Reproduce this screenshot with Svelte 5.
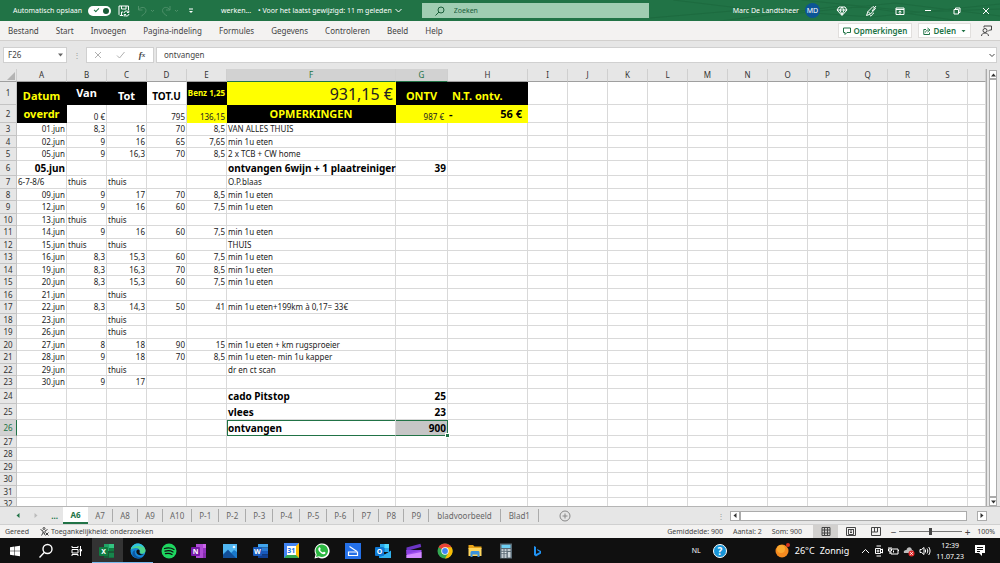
<script>
	const menu = ['Bestand', 'Start', 'Invoegen', 'Pagina-indeling', 'Formules', 'Gegevens', 'Controleren', 'Beeld', 'Help'];
	const letters = 'ABCDEFGHIJKLMNOPQRS'.split('');
	const tabs = ['A6', 'A7', 'A8', 'A9', 'A10', 'P-1', 'P-2', 'P-3', 'P-4', 'P-5', 'P-6', 'P7', 'P8', 'P9', 'bladvoorbeeld', 'Blad1'];

	// row number, height, cells from column A on
	const rows = [
		[3, 13, ['01.jun', '8,3', '16', '70', '8,5', 'VAN ALLES THUIS']],
		[4, 12, ['02.jun', '9', '16', '65', '7,65', 'min 1u eten']],
		[5, 13, ['05.jun', '9', '16,3', '70', '8,5', '2 x TCB + CW home']],
		[6, 15, ['05.jun', '', '', '', '', 'ontvangen 6wijn + 1 plaatreiniger', '39']],
		[7, 13, ['6-7-8/6', 'thuis', 'thuis', '', '', 'O.P.blaas']],
		[8, 12, ['09.jun', '9', '17', '70', '8,5', 'min 1u eten']],
		[9, 13, ['12.jun', '9', '16', '60', '7,5', 'min 1u eten']],
		[10, 12, ['13.jun', 'thuis', 'thuis']],
		[11, 13, ['14.jun', '9', '16', '60', '7,5', 'min 1u eten']],
		[12, 12, ['15.jun', 'thuis', 'thuis', '', '', 'THUIS']],
		[13, 13, ['16.jun', '8,3', '15,3', '60', '7,5', 'min 1u eten']],
		[14, 12, ['19.jun', '8,3', '16,3', '70', '8,5', 'min 1u eten']],
		[15, 13, ['20.jun', '8,3', '15,3', '60', '7,5', 'min 1u eten']],
		[16, 12, ['21.jun', '', 'thuis']],
		[17, 13, ['22.jun', '8,3', '14,3', '50', '41', 'min 1u eten+199km à 0,17= 33€']],
		[18, 12, ['23.jun', '', 'thuis']],
		[19, 13, ['26.jun', '', 'thuis']],
		[20, 12, ['27.jun', '8', '18', '90', '15', 'min 1u eten + km rugsproeier']],
		[21, 13, ['28.jun', '9', '18', '70', '8,5', 'min 1u eten- min 1u kapper']],
		[22, 12, ['29.jun', '', 'thuis', '', '', 'dr en ct scan']],
		[23, 13, ['30.jun', '9', '17']],
		[24, 15, ['', '', '', '', '', 'cado Pitstop', '25']],
		[25, 16, ['', '', '', '', '', 'vlees', '23']],
		[26, 16, ['', '', '', '', '', 'ontvangen', '900']],
		[27, 12, []],
		[28, 13, []],
		[29, 12, []],
		[30, 13, []],
		[31, 12, []],
		[32, 13, []]
	];
	const big = [6, 24, 25, 26];

	let autosave = true;
	let active = 'A6';
	let formula = 'ontvangen';
	let search = '';
	let zoom = 50;

	function isNumber(value, col) {
		return col < 5 || col === 6 ? /^\d/.test(value) && value !== '6-7-8/6' : false;
	}
</script>

<div class="app">
	<header class="title">
		<svg class="pattern" viewBox="0 0 300 21" preserveAspectRatio="none" aria-hidden="true">
			<path d="M0 18L90 9L190 17L300 4M20 0L120 14L210 3L300 16M60 21L170 5L260 20M130 0L230 12L300 9" fill="none" stroke="#1b663c" />
		</svg>
		<label class="auto">
			Automatisch opslaan
			<input type="checkbox" bind:checked={autosave} />
		</label>
		<button aria-label="Opslaan">
			<svg width="12" height="12" viewBox="0 0 12 12" class="line"><path d="M5 10.500H2L1 9.500V1H10.500V5M3.500 1V4H8V1M3.500 10V7H5M6 8A2.500 2.500 0 0 1 10.500 7M10.800 5.500V7.500H9M11 9A2.500 2.500 0 0 1 6.500 10M6.200 11.500V9.500H8" /></svg>
		</button>
		<button class="dim undo" aria-label="Ongedaan maken">
			<svg width="18" height="12" viewBox="0 0 18 12" class="line"><path d="M1.500 1V5H5.500M1.500 5C4 1 9 2 9 5.500C9 8 7 9 4.500 11M14 5L15.500 6.500L17 5" /></svg>
		</button>
		<button class="dim redo" aria-label="Opnieuw">
			<svg width="18" height="12" viewBox="0 0 18 12" class="line"><path d="M9 1V5H5M9 5C6.500 1 1.500 2 1.500 5.500C1.500 8 3.500 9 6 11M14 5L15.500 6.500L17 5" /></svg>
		</button>
		<button class="more" aria-label="Werkbalk aanpassen">
			<svg width="6" height="6" viewBox="0 0 6 6"><path d="M1 0.500H5V1.500H1ZM1 3H5L3 5Z" fill="#fff" /></svg>
		</button>
		<span class="file">werken...</span>
		<button class="changed">
			• Voor het laatst gewijzigd: 11 m geleden
			<svg width="7" height="5" viewBox="0 0 7 5" class="line"><path d="M.5 1L3.500 4L6.500 1" /></svg>
		</button>
		<label class="search">
			<svg width="10" height="10" viewBox="0 0 10 10" class="line"><circle cx="6" cy="4" r="3" /><path d="M4 6L.5 9.500" /></svg>
			<input type="text" placeholder="Zoeken" aria-label="Zoeken" bind:value={search} />
		</label>
		<span class="user">Marc De Landtsheer</span>
		<span class="avatar">MD</span>
		<div class="window">
			<button aria-label="Premium"><svg width="12" height="12" viewBox="0 0 12 12" class="line"><path d="M3 2H9L11 5L6 10.500L1 5ZM1 5H11M4 5L6 10L8 5L6 2L4 5" /></svg></button>
			<button aria-label="Pen"><svg width="12" height="12" viewBox="0 0 12 12" class="line"><path d="M1.500 10.500L3 6.500L8 1.500L10.500 3.500L5.500 9L1.500 10.500M3 6.500L5.500 9M7 6L11 1M5 11C8 11 7 8 9 8" /></svg></button>
			<button aria-label="Lint"><svg width="10" height="10" viewBox="0 0 10 10" class="line"><path d="M1 2H9V8.500H1ZM1 3.500H9M5 8V5M3.500 6.200L5 4.800L6.500 6.200" /></svg></button>
			<button aria-label="Minimaliseren"><svg width="8" height="8" viewBox="0 0 8 8" class="line"><path d="M1 3.500H7" /></svg></button>
			<button aria-label="Verkleinen"><svg width="8" height="8" viewBox="0 0 8 8" class="line"><path d="M1 2.500H5.500V7H1ZM2.500 2.500V1H7V5.500H5.500" /></svg></button>
			<button aria-label="Sluiten"><svg width="8" height="8" viewBox="0 0 8 8" class="line"><path d="M1 1L7 7M7 1L1 7" /></svg></button>
		</div>
	</header>

	<nav class="ribbon">
		{#each menu as item}
			<button>{item}</button>
		{/each}
		<div class="share">
			<button class="box">
				<svg width="8" height="8" viewBox="0 0 8 8" class="line"><path d="M.5 1H7.500V5.500H4L2 7.500V5.500H.5Z" /></svg>
				Opmerkingen
			</button>
			<button class="box">
				<svg width="8" height="8" viewBox="0 0 8 8" class="line"><path d="M3 2.500H.8V7.500H6.500V5.500M2.500 5.500C3 3.500 4 3 5.500 3M4.500 1L7 3L4.500 5" /></svg>
				Delen
				<svg class="caret" width="5" height="4" viewBox="0 0 5 4"><path d="M.5 1H4.500L2.500 3.200Z" fill="#217346" /></svg>
			</button>
			<button class="person" aria-label="Feedback">
				<svg width="12" height="12" viewBox="0 0 12 12" class="line"><circle cx="5" cy="5.500" r="2" /><path d="M1.500 11C1.500 7 8.500 7 8.500 11M4 2.500V1H11.500V5H9.500L8 6.500" /></svg>
			</button>
		</div>
	</nav>

	<div class="bar">
		<div class="name">
			<select aria-label="Naamvak"><option>F26</option></select>
			<svg width="5" height="4" viewBox="0 0 5 4"><path d="M0 .5H5L2.500 3.500Z" fill="#666" /></svg>
		</div>
		<span class="dots">⋮</span>
		<div class="tools">
			<button aria-label="Annuleren"><svg width="8" height="8" viewBox="0 0 8 8" class="line"><path d="M1 1L7 7M7 1L1 7" /></svg></button>
			<button aria-label="Invoeren"><svg width="9" height="8" viewBox="0 0 9 8" class="line"><path d="M1 4.500L3.500 7L8.500 1" /></svg></button>
			<button class="fx" aria-label="Functie invoegen">f<small>x</small></button>
		</div>
		<div class="formula">
			<input type="text" aria-label="Formulebalk" bind:value={formula} />
			<svg width="6" height="5" viewBox="0 0 6 5" class="line"><path d="M.5 1L3 3.500L5.500 1" /></svg>
		</div>
	</div>

	<main>
		<div class="sheet">
			<table>
				<colgroup>
					<col class="w17" /><col class="w50" />
					<col class="w40" /><col class="w40" /><col class="w40" /><col class="w40" />
					<col class="w169" /><col class="w52" /><col class="w80" />
					{#each letters.slice(8) as l}<col class="w40" />{/each}
					<col />
				</colgroup>
				<thead>
					<tr>
						<th class="corner"><svg width="8" height="8" viewBox="0 0 8 8"><path d="M8 0V8H0Z" fill="#b4b4b4" /></svg></th>
						{#each letters as l}
							<th class:on={l === 'F' || l === 'G'}>{l}</th>
						{/each}
						<th></th>
					</tr>
				</thead>
				<tbody>
					<tr class="head first">
						<th>1</th>
						<td class="k">Datum</td>
						<td class="k white mid">Van</td>
						<td class="k white">Tot</td>
						<td class="totu">TOT.U</td>
						<td class="k benz mid">Benz 1,25</td>
						<td class="y sum">931,15 €</td>
						<td class="k">ONTV</td>
						<td class="k left">N.T. ontv.</td>
						{#each letters.slice(7) as l}<td></td>{/each}
					</tr>
					<tr class="head second">
						<th>2</th>
						<td class="k">overdr</td>
						<td class="num">0 €</td>
						<td></td>
						<td class="num">795</td>
						<td class="num y">136,15</td>
						<td class="k">OPMERKINGEN</td>
						<td class="num y euro">987 €</td>
						<td class="y"><span class="acc"><span>-</span><span>56 €</span></span></td>
						{#each letters.slice(7) as l}<td></td>{/each}
					</tr>
					{#each rows as [n, height, cells]}
						<tr style="height: {height}px" class:big={big.includes(n)} class:pick={n === 26}>
							<th class:on={n === 26}>{n}</th>
							{#each { length: 20 } as _, col}
								<td class:num={isNumber(cells[col] ?? '', col)}>{cells[col] ?? ''}</td>
							{/each}
						</tr>
					{/each}
				</tbody>
			</table>
		</div>
		<div class="vscroll">
			<button aria-label="Omhoog"><svg width="5" height="4" viewBox="0 0 5 4"><path d="M0 3.500H5L2.500 .5Z" fill="#333" /></svg></button>
			<div class="thumb"></div>
			<button aria-label="Omlaag"><svg width="5" height="4" viewBox="0 0 5 4"><path d="M0 .5H5L2.500 3.500Z" fill="#333" /></svg></button>
		</div>
	</main>

	<div class="tabs">
		<div class="arrows">
			<button aria-label="Vorige"><svg width="4" height="5" viewBox="0 0 4 5"><path d="M3.500 0V5L.5 2.500Z" fill="#217346" /></svg></button>
			<button aria-label="Volgende"><svg width="4" height="5" viewBox="0 0 4 5"><path d="M.5 0V5L3.500 2.500Z" fill="#bbb" /></svg></button>
			<button class="dotdot">...</button>
		</div>
		{#each tabs as tab}
			<button class="tab" class:wide={tab.length > 3} class:active={tab === active} on:click={() => (active = tab)}>{tab}</button>
		{/each}
		<button class="plus" aria-label="Nieuw blad">
			<svg width="12" height="12" viewBox="0 0 12 12" class="line"><circle cx="6" cy="6" r="5" /><path d="M6 3.500V8.500M3.500 6H8.500" /></svg>
		</button>
		<span class="dots grip">⋮</span>
		<div class="hscroll">
			<button aria-label="Links"><svg width="4" height="5" viewBox="0 0 4 5"><path d="M3.500 0V5L.5 2.500Z" fill="#333" /></svg></button>
			<div class="thumb"></div>
			<button aria-label="Rechts"><svg width="4" height="5" viewBox="0 0 4 5"><path d="M.5 0V5L3.500 2.500Z" fill="#333" /></svg></button>
		</div>
	</div>

	<footer class="status">
		<span>Gereed</span>
		<button class="access">
			<svg width="9" height="9" viewBox="0 0 9 9" class="line"><circle cx="4" cy="1.500" r="1" /><path d="M.5 2.500L3 4V6L1.500 8.500M7.500 2.500L5 4V5.500M3 6L4 5.500L5 8M5.500 5.500L8.500 8.500M8.500 5.500L5.500 8.500" /></svg>
			Toegankelijkheid: onderzoeken
		</button>
		<div class="stats">
			<span>Gemiddelde: 900</span>
			<span>Aantal: 2</span>
			<span>Som: 900</span>
		</div>
		<div class="views">
			<button class="now" aria-label="Normaal"><svg width="10" height="9" viewBox="0 0 10 9" class="line"><path d="M1 .5H9V8.500H1ZM1 3H9M1 6H9M3.500 .5V8.500M6.500 .5V8.500" /></svg></button>
			<button aria-label="Pagina-indeling"><svg width="10" height="9" viewBox="0 0 10 9" class="line"><path d="M.5 .5H9.500V8.500H.5ZM2.500 2V7.500M7.500 2V7.500M2.500 2.500H7.500M4 4H6M4 5.500H6M2.500 7.500H7.500" /></svg></button>
			<button aria-label="Pagina-eindevoorbeeld"><svg width="10" height="9" viewBox="0 0 10 9" class="line"><path d="M.5 .5H9.500V8.500H.5ZM3.500 .5V5H.5M6.500 .5V5H3.500" /></svg></button>
		</div>
		<span class="sign">−</span>
		<input type="range" min="0" max="100" aria-label="Zoomen" bind:value={zoom} />
		<span class="sign">+</span>
		<span class="percent">100%</span>
	</footer>

	<div class="taskbar">
		<div class="apps">
			<button aria-label="Start"><svg width="12" height="12" viewBox="0 0 12 12"><path d="M1 2.200L5.500 1.500V5.700H1ZM6 1.400L11 .7V5.700H6ZM1 6.200H5.500V10.500L1 9.800ZM6 6.200H11V11.300L6 10.600Z" fill="#fff" /></svg></button>
			<button aria-label="Zoeken"><svg width="16" height="16" viewBox="0 0 16 16"><circle cx="9.500" cy="6" r="4.500" fill="none" stroke="#fff" stroke-width="1.400" /><path d="M6.200 9.500L1.500 14.500" stroke="#fff" stroke-width="1.400" /></svg></button>
			<button aria-label="Taakweergave"><svg width="12" height="12" viewBox="0 0 12 12" class="line"><path d="M1 1V2.500H7V1M1 4.500H7V8H1ZM1 11V9.500H7V11M9.500 1V11M8.500 4.500H10.500V6H8.500" /></svg></button>
			<button class="open lit" aria-label="Excel"><svg width="16" height="16" viewBox="0 0 16 16"><path d="M5 1H10V8H5Z" fill="#21a366" /><path d="M10 1H15V5H10Z" fill="#33c481" /><path d="M10 5H15V10H10Z" fill="#107c41" /><path d="M5 8H15V15H5Z" fill="#185c37" /><path d="M10 10H15V14.500H10Z" fill="#17864c" /><rect y="4" width="9" height="9" rx="1" fill="#107c41" /><text x="4.500" y="11">X</text></svg></button>
			<button class="open" aria-label="Edge"><svg width="16" height="16" viewBox="0 0 16 16"><circle cx="8" cy="8" r="7.500" fill="#1689d8" /><path d="M.7 7C1.500 0 12.500 -1.500 15.400 6.500C16.200 10 13 11.500 9.800 10.200C11 8.500 9.500 5 6 5C3 5 1.200 6 .7 7Z" fill="#4fd58c" /><path d="M.7 6.500C2 1.500 6 0 9 .6C12 1.500 13 3 13.500 4.500C9 2 3.500 3 .7 6.500Z" fill="#2fc3df" /><path d="M5.500 7C3 11 8 16 13 13.500C11 16.500 5 16 3 13C1.500 10 3 7.500 5.500 7Z" fill="#0c59a4" /><path d="M9.800 10.200C9 9.500 10 8.500 9.500 7.200C8.500 6 6.500 6.500 6.300 9C7 12.500 11.500 12.800 14.300 11.200C13 11.700 10.800 11.300 9.800 10.200Z" fill="#101010" /></svg></button>
			<button aria-label="Spotify"><svg width="16" height="16" viewBox="0 0 16 16"><circle cx="8" cy="8" r="7.500" fill="#1ed760" /><path d="M3.500 5.500C7 4.500 10.500 5 13 6.500M4 8.200C7 7.300 10 7.800 12 9M4.500 10.700C7 10 9.500 10.500 11 11.500" fill="none" stroke="#101010" stroke-width="1.300" stroke-linecap="round" /></svg></button>
			<button aria-label="OneNote"><svg width="16" height="16" viewBox="0 0 16 16"><path d="M5 1H15V15H5Z" fill="#ae4bd5" /><path d="M12 1H15V5H12Z" fill="#ca64ea" /><path d="M12 5H15V10H12Z" fill="#9332bf" /><path d="M12 10H15V15H12Z" fill="#862cad" /><rect y="4" width="9" height="9" rx="1" fill="#7719aa" /><text x="4.500" y="11">N</text></svg></button>
			<button aria-label="Foto's"><svg width="16" height="16" viewBox="0 0 16 16"><rect x="1" y="1" width="14" height="14" fill="#1979ca" /><path d="M1 1H15V9L12 7L9 10L6 6.500L1 11Z" fill="#50b6f2" /><path d="M1 12L6 7L14 15H1Z" fill="#124f98" /><circle cx="12" cy="4" r="1.300" fill="#e8f6ff" /></svg></button>
			<button aria-label="Word"><svg width="16" height="16" viewBox="0 0 16 16"><path d="M5 1H15V4.500H5Z" fill="#41a5ee" /><path d="M5 4.500H15V8H5Z" fill="#2b7cd3" /><path d="M5 8H15V11.500H5Z" fill="#185abd" /><path d="M5 11.500H15V15H5Z" fill="#103f91" /><rect y="4" width="9" height="9" rx="1" fill="#185abd" /><text x="4.500" y="11">W</text></svg></button>
			<button aria-label="Agenda"><span class="cal">31</span></button>
			<button aria-label="WhatsApp"><svg width="16" height="16" viewBox="0 0 16 16"><path d="M.5 15.500L1.500 11.500A7.500 7.500 0 1 1 4.500 14.500Z" fill="#fff" /><path d="M2 14L2.700 11.300A6.200 6.200 0 1 1 5 13.300Z" fill="#2bb741" /><path d="M5 4.500C6 3.500 6.500 5 6.700 6C6.700 6.500 6 6.700 6.200 7.200C7 8.500 8 9.300 9 9.500C9.500 9.500 9.700 8.700 10.200 8.800C11 9.200 12 9.500 11.300 10.500C9.500 13 4 8.500 4.300 6C4.400 5.200 4.700 5 5 4.500Z" fill="#fff" /></svg></button>
			<button aria-label="Scanner"><svg width="16" height="16" viewBox="0 0 16 16"><rect width="16" height="16" fill="#2470e8" /><path d="M4.500 3.500L12 8.500" fill="none" stroke="#fff" stroke-width="1.200" /><path d="M3.500 9H12.500V12.500H3.500Z" fill="none" stroke="#fff" stroke-width="1.200" /></svg></button>
			<button aria-label="Outlook"><svg width="16" height="16" viewBox="0 0 16 16"><path d="M5 1H14V9H5Z" fill="#28a8ea" /><path d="M9.500 1H14V5H9.500Z" fill="#50d9ff" /><path d="M5 5H9.500V9H5Z" fill="#0364b8" /><path d="M4 8L10 11.500L16 7.500V15H4Z" fill="#1490df" /><path d="M4 15L16 8V15Z" fill="#32b1ec" /><rect y="4" width="9" height="9" rx="1" fill="#0f78d4" /><text x="4.500" y="11">O</text></svg></button>
			<button aria-label="Clipchamp"><svg width="16" height="16" viewBox="0 0 16 16"><path d="M.5 4.500L14.500 .8L15.200 4L.5 8Z" fill="#6b35c4" /><path d="M.5 7H15.500V15H.5Z" fill="#a04df0" /><path d="M.5 7H15.500L.5 11Z" fill="#8a3fe0" /><path d="M.5 12L15.500 9V15H.5Z" fill="#d48bff" /></svg></button>
			<button aria-label="Chrome"><svg width="16" height="16" viewBox="0 0 16 16"><circle cx="8" cy="8" r="7.500" fill="#34a853" /><path d="M8 8L1.500 4.250A7.500 7.500 0 0 1 14.500 4.250Z" fill="#ea4335" /><path d="M8 4.300H14.600A7.500 7.500 0 0 1 8 15.500L11.200 10Z" fill="#fbbc05" /><circle cx="8" cy="8" r="3.700" fill="#fff" /><circle cx="8" cy="8" r="2.900" fill="#4285f4" /></svg></button>
			<button aria-label="Verkenner"><svg width="16" height="16" viewBox="0 0 16 16"><path d="M1.500 2H6L7.500 3.500H14.500V6H1.500Z" fill="#e8a317" /><path d="M1.500 5H14.500V13H1.500Z" fill="#ffd75e" /><path d="M3.500 14V9.500C3.500 8.500 4.500 8 5 8H11C12 8 12.500 8.500 12.500 9.500V14H10.500V11.500H5.500V14Z" fill="#3b92dc" /></svg></button>
			<button aria-label="Rekenmachine"><svg width="16" height="16" viewBox="0 0 16 16"><rect x="2" y=".5" width="12" height="15" fill="#5a6a75" /><rect x="3.500" y="1.800" width="9" height="3.200" fill="#6fd0f4" /><path d="M3.500 7H5.500M6.500 7H8.500M9.500 7H12.500M3.500 9.500H5.500M6.500 9.500H8.500M3.500 12H5.500M6.500 12H8.500M3.500 14H5.500M6.500 14H8.500" stroke="#e1e8ec" stroke-width="1.500" /><path d="M9.800 9H12.500V14.500H9.800Z" fill="#cfd8de" /></svg></button>
			<button aria-label="Bing"><svg width="12" height="12" viewBox="0 0 12 12"><path d="M3 1L5 2V9L9 7L6.500 5.500L6 4L10 6V8.500L5 11.500L3 10Z" fill="#2193f3" /></svg></button>
		</div>
		<div class="tray">
			<button class="lang">NL</button>
			<button class="help" aria-label="Help"><span>?</span></button>
			<button class="weather">
				<svg width="15" height="15" viewBox="0 0 15 15"><circle cx="7" cy="8" r="6.500" fill="#f58a1f" /><circle cx="6" cy="6" r="4" fill="#fba92f" /><circle cx="13" cy="2" r="2" fill="#d8321e" /></svg>
				<span>26°C</span><span>Zonnig</span>
			</button>
			<svg width="9" height="6" viewBox="0 0 9 6" class="line"><path d="M1 5L4.500 1.500L8 5" /></svg>
			<svg width="10" height="12" viewBox="0 0 10 12" class="line"><path d="M1.500 3.500H6.500V8.500H1.500ZM6.500 5L8.500 4V8L6.500 7M2.500 1H7M2.500 11H7" /><circle cx="4" cy="6" r="1" /></svg>
			<svg width="11" height="10" viewBox="0 0 11 10" class="line"><path d="M4 3H10V8H3V6M10 4.500H11M1 1V3M3 1V3M.5 3H3.500V5H.5ZM2 5V8M5.500 4.500V6.500" /></svg>
			<svg width="12" height="12" viewBox="0 0 12 12"><path d="M1 8C0 5 3 5 3.500 5C4 2 8 1 9 5C11 5 11 8 9 8Z" fill="#bbb" /><circle cx="8.500" cy="8.500" r="3" fill="#e02b2b" /><path d="M7.300 7.300L9.700 9.700M9.700 7.300L7.300 9.700" stroke="#fff" /></svg>
			<svg width="12" height="10" viewBox="0 0 12 10" class="line"><path d="M1 3.500H2.500L5 1.500V8.500L2.500 6.500H1ZM6.500 3.500V6.500M8 2.500C9 4 9 6 8 7.500M9.700 1C11.500 3.500 11.500 6.500 9.700 9" /></svg>
			<div class="clock"><span>12:39</span><span>11.07.23</span></div>
			<button aria-label="Meldingen"><svg width="12" height="13" viewBox="0 0 12 13"><path d="M1 1H11V9H8V12L5 9H1Z" fill="#fff" /><path d="M3 3.500H9M3 5.500H9M3 7.500H6" stroke="#111" /></svg></button>
		</div>
	</div>
</div>

<style>
	:global(body) {
		margin: 0;
	}
	.app {
		height: 100vh;
		display: flex;
		flex-direction: column;
		background: #e6e6e6;
		font: 8px/10px 'Noto Sans', 'Open Sans', sans-serif;
		color: #444;
		overflow: hidden;
		white-space: nowrap;
	}
	.app > * {
		box-sizing: border-box;
		flex-shrink: 0;
	}
	button,
	input,
	select {
		font: inherit;
		color: inherit;
		background: none;
		border: 0;
		padding: 0;
		margin: 0;
		min-width: 0;
		box-sizing: border-box;
	}
	button {
		display: flex;
		align-items: center;
		justify-content: center;
	}
	svg {
		display: block;
		flex-shrink: 0;
	}
	.line {
		fill: none;
		stroke: currentColor;
	}

	/* title bar */
	.title {
		position: relative;
		display: flex;
		align-items: center;
		height: 21px;
		padding-left: 13px;
		background: #217346;
		color: #fff;
		font-size: 7px;
	}
	.title > * {
		position: relative;
	}
	.title .pattern {
		position: absolute;
		right: 0;
		top: 0;
		width: 35%;
		height: 100%;
		opacity: 0.6;
	}
	.auto {
		display: flex;
		align-items: center;
		gap: 6px;
		margin-right: 7px;
	}
	.auto input {
		appearance: none;
		position: relative;
		width: 23px;
		height: 10px;
		border-radius: 5px;
		background: #fff;
	}
	.auto input::before {
		content: '';
		position: absolute;
		left: 6px;
		top: 2px;
		width: 4px;
		height: 2px;
		border: solid #217346;
		border-width: 0 0 1px 1px;
		transform: rotate(-45deg);
	}
	.auto input::after {
		content: '';
		position: absolute;
		right: 2px;
		top: 2px;
		width: 6px;
		height: 6px;
		border-radius: 50%;
		background: #185c37;
	}
	.dim {
		color: #4d9069;
	}
	.undo {
		margin-left: 7px;
	}
	.redo {
		margin-left: 6px;
	}
	.more {
		margin-left: 9px;
	}
	.file {
		margin-left: 27px;
	}
	.changed {
		margin-left: 7px;
		gap: 3px;
	}
	.search {
		display: flex;
		align-items: center;
		width: 23%;
		height: 15px;
		margin-left: 20px;
		padding-left: 13px;
		box-sizing: border-box;
		gap: 9px;
		background: #a0cdb2;
		color: #1b5e3a;
	}
	.search input {
		flex: 1;
	}
	.search input::placeholder {
		color: #1b5e3a;
		opacity: 1;
	}
	.user {
		margin-left: auto;
	}
	.avatar {
		width: 15px;
		margin-left: 6px;
		border-radius: 50%;
		background: #0c5595;
		line-height: 15px;
		text-align: center;
	}
	.window {
		display: flex;
		width: 172px;
		margin-left: 8px;
	}
	.window button {
		flex: 1;
	}

	/* ribbon */
	.ribbon {
		display: flex;
		align-items: center;
		height: 20px;
		padding: 0 8px;
		gap: 17px;
		background: #f3f2f1;
		border-bottom: 1px solid #d2d0ce;
	}
	.share {
		display: flex;
		gap: 6px;
		margin-left: auto;
	}
	.box {
		height: 15px;
		padding: 0 4px;
		gap: 2px;
		background: #fff;
		border: 1px solid #e1dfdd;
		color: #217346;
		font-weight: 600;
	}
	.caret {
		margin-left: 3px;
	}
	.person {
		margin-left: 3px;
	}

	/* formula bar */
	.bar {
		display: flex;
		height: 28px;
		padding: 6px 3px;
	}
	.name,
	.tools,
	.formula {
		display: flex;
		align-items: center;
		box-sizing: border-box;
		height: 16px;
		background: #fff;
		border: 1px solid #d0d0d0;
	}
	.name {
		width: 64px;
		padding: 0 3px 0 4px;
	}
	.name select {
		appearance: none;
		flex: 1;
	}
	.dots {
		width: 19px;
		line-height: 16px;
		text-align: center;
		color: #999;
	}
	.tools {
		width: 68px;
		color: #b0b0b0;
	}
	.tools button {
		flex: 1;
	}
	.tools .fx {
		font: italic bold 9px/10px 'Liberation Serif', serif;
		color: #444;
	}
	small {
		font-size: 7px;
	}
	.formula {
		flex: 1;
		margin-left: 2px;
		padding: 0 1px 0 7px;
	}
	.formula input {
		flex: 1;
	}

	/* sheet */
	main {
		flex: 1 1 0 !important;
		min-height: 0;
		display: flex;
	}
	.sheet {
		flex: 1;
		overflow: hidden;
		border-right: 1px solid #ababab;
	}
	table {
		width: 100%;
		table-layout: fixed;
		border-spacing: 0;
		background: #fff;
		font-size: 8px;
		line-height: 10px;
		color: #222;
	}
	.w17 {
		width: 17px;
	}
	.w40 {
		width: 40px;
	}
	.w50 {
		width: 50px;
	}
	.w52 {
		width: 52px;
	}
	.w80 {
		width: 80px;
	}
	.w169 {
		width: 169px;
	}
	th,
	td {
		box-sizing: border-box;
		padding: 0 1px;
		border: solid #d9d9d9;
		border-width: 0 1px 1px 0;
		text-align: left;
	}
	th {
		padding: 0;
		background: #e6e6e6;
		border-color: #c4c4c4;
		color: #333;
		font-weight: 400;
		text-align: center;
	}
	thead th {
		height: 13px;
		border-color: #e6e6e6 #cfcfcf #9f9f9f;
	}
	.corner svg {
		margin: 1px 1px 0 auto;
	}
	th.on {
		background: #d2d2d2;
		color: #217346;
		border-bottom-color: #217346;
	}
	tbody th.on {
		border-color: #217346 #217346 #c4c4c4;
	}
	.num {
		text-align: right;
	}
	tr.first {
		height: 23px;
	}
	tr.second {
		height: 18px;
	}
	.head td {
		vertical-align: bottom;
		overflow: hidden;
	}
	.head .mid {
		vertical-align: middle;
	}
	td.k {
		background: #000;
		border-color: #000;
		color: #ff0;
		font-size: 11px;
		line-height: 16px;
		font-weight: 700;
		text-align: center;
	}
	td.white {
		color: #fff;
	}
	td.benz {
		padding: 0;
		font-size: 8px;
	}
	td.left {
		padding-left: 4px;
		text-align: left;
	}
	td.totu {
		font-size: 10px;
		line-height: 16px;
		font-weight: 700;
		text-align: center;
		color: #000;
	}
	td.y {
		background: #ff0;
		border-color: #ff0;
	}
	td.sum {
		padding-right: 2px;
		font-size: 16px;
		line-height: 20px;
		text-align: right;
	}
	td.euro {
		padding-right: 3px;
	}
	.acc {
		display: flex;
		justify-content: space-between;
		padding-right: 4px;
		font-size: 11px;
		line-height: 16px;
		font-weight: 700;
		color: #000;
	}
	.big td {
		font-size: 10px;
		line-height: 12px;
		font-weight: 700;
		color: #000;
	}
	.pick td:nth-child(7) {
		border-bottom-color: #217346;
		box-shadow: inset 1px 1px #217346;
	}
	.pick td:nth-child(8) {
		position: relative;
		background: #c6c6c6;
		border-color: #217346;
		box-shadow: inset 0 1px #217346;
	}
	.pick td:nth-child(8)::after {
		content: '';
		position: absolute;
		right: -2px;
		bottom: -2px;
		width: 3px;
		height: 3px;
		background: #217346;
		outline: 1px solid #fff;
	}
	.vscroll {
		width: 13px;
		display: flex;
		flex-direction: column;
		padding: 1px 3px 0 2px;
		box-sizing: border-box;
	}
	.vscroll button,
	.thumb {
		background: #fff;
		border: 1px solid #ababab;
	}
	.vscroll button {
		height: 9px;
	}
	.vscroll .thumb {
		flex: 1;
	}

	/* sheet tabs */
	.tabs {
		display: flex;
		align-items: center;
		height: 18px;
		padding-right: 13px;
		border-top: 1px solid #b5b5b5;
		color: #666;
	}
	.arrows {
		display: flex;
		width: 63px;
		padding: 0 5px 0 16px;
		box-sizing: border-box;
		justify-content: space-between;
	}
	.dotdot {
		color: #217346;
		font-weight: 700;
	}
	.tab {
		height: 13px;
		min-width: 25px;
		padding: 0 7px;
		border-right: 1px solid #ababab;
	}
	.tab.wide {
		padding: 0 8px;
	}
	.tab.active {
		height: 17px;
		background: #fff;
		border-right: 0;
		border-bottom: 2px solid #217346;
		color: #217346;
		font-weight: 700;
	}
	.plus {
		margin-left: 20px;
		color: #888;
	}
	.grip {
		margin-left: auto;
	}
	.hscroll {
		display: flex;
		width: 26%;
		height: 10px;
	}
	.hscroll button {
		width: 10px;
		background: #fff;
		border: 1px solid #ababab;
	}
	.hscroll .thumb {
		flex: 1;
		margin-right: 10px;
	}

	/* status bar */
	.status {
		display: flex;
		align-items: center;
		height: 14px;
		padding: 0 5px;
		background: #f3f2f1;
		border-top: 1px solid #d0d0d0;
		font-size: 7px;
	}
	.access {
		margin-left: 11px;
		gap: 2px;
	}
	.stats {
		display: flex;
		gap: 10px;
		margin-left: auto;
	}
	.views {
		display: flex;
		align-self: stretch;
		margin-left: 11px;
	}
	.views button {
		width: 25px;
	}
	.views .now {
		background: #d2d0ce;
	}
	.sign {
		width: 11px;
		font-size: 10px;
		text-align: center;
	}
	.status input {
		appearance: none;
		width: 63px;
		height: 9px;
		background: linear-gradient(#777, #777) center / 100% 1px no-repeat;
	}
	.status input::-webkit-slider-thumb {
		appearance: none;
		width: 3px;
		height: 7px;
		background: #444;
	}
	.percent {
		width: 22px;
		text-align: right;
	}

	/* taskbar */
	.taskbar {
		display: flex;
		height: 25px;
		background: #101010;
		color: #fff;
	}
	.apps {
		display: flex;
		width: 552px;
	}
	.apps button {
		flex: 1;
		border-top: 1px solid transparent;
		border-bottom: 1px solid transparent;
	}
	.apps .open {
		border-bottom-color: #76b9ed;
	}
	.apps .lit {
		background: #333;
	}
	.apps text {
		fill: #fff;
		font-size: 7px;
		font-weight: 700;
		text-anchor: middle;
	}
	.cal {
		width: 9px;
		border: solid #4285f4;
		border-width: 3px;
		border-right-color: #fbbc05;
		border-bottom-color: #34a853;
		background: #fff;
		color: #1a73e8;
		font-weight: 700;
		font-size: 7px;
		line-height: 9px;
		text-align: center;
	}
	.tray {
		display: flex;
		flex: 1;
		align-items: center;
		justify-content: flex-end;
		gap: 4px;
		padding-right: 14px;
	}
	.lang {
		margin-right: 8px;
		font-size: 7px;
	}
	.help span {
		width: 12px;
		border: 1px solid #fff;
		border-radius: 50%;
		background: #1795d8;
		font-size: 10px;
		font-weight: 700;
		line-height: 12px;
	}
	.weather {
		gap: 5px;
		margin: 0 8px 0 44px;
		font-size: 9px;
	}
	.clock {
		display: flex;
		flex-direction: column;
		align-items: center;
		margin: 0 6px 0 1px;
		font-size: 7px;
		line-height: 11px;
	}
</style>
